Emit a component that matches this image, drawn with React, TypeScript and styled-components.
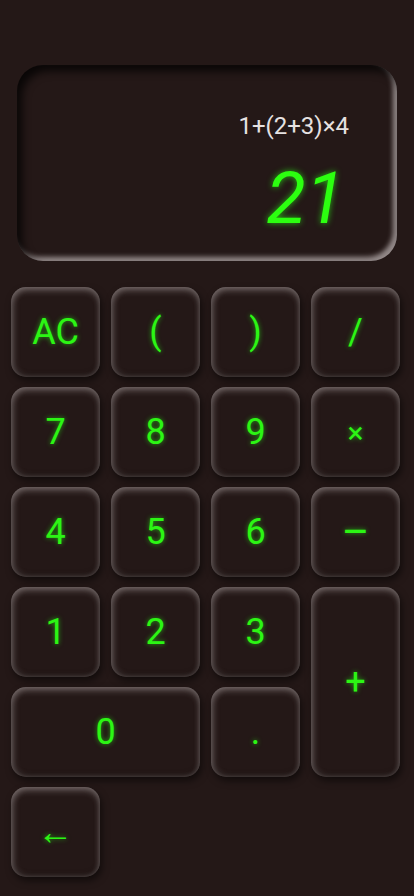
import React from "react";
import styled, { createGlobalStyle } from "styled-components";

const Global = createGlobalStyle`
  html, body { margin: 0; padding: 0; background: #241817; }
  body { font-family: Roboto, "Noto Sans", sans-serif; }
`;

const Page = styled.div`
  width: 414px;
  height: 896px;
  background: #241817;
  display: flex;
  flex-direction: column;
  box-sizing: border-box;
  padding-top: 65px;
  overflow: hidden;
`;

const Display = styled.div`
  margin: 0 17px 0 17px;
  height: 196px;
  border-radius: 26px;
  background: #241817;
  box-shadow: inset 5px 6px 8px rgba(0, 0, 0, 0.75),
    inset -4px -4px 5px rgba(190, 180, 180, 0.75);
  display: flex;
  flex-direction: column;
  align-items: flex-end;
  box-sizing: border-box;
  padding: 46px 48px 0 0;
`;

const Expression = styled.div`
  color: #e6e2e2;
  font-size: 24px;
  line-height: 30px;
`;

const Result = styled.div`
  color: #2cff10;
  font-size: 72px;
  font-style: italic;
  line-height: 90px;
  margin-right: 4px;
  margin-top: 13px;
  text-shadow: 0 0 6px rgba(40, 255, 20, 0.7);
`;

const Keypad = styled.div`
  margin-top: 26px;
  padding-left: 11px;
  display: grid;
  grid-template-columns: repeat(4, 89px);
  grid-auto-rows: 90px;
  gap: 10px 11px;
`;

const Key = styled.button<{ $wide?: boolean; $tall?: boolean; $size?: number }>`
  grid-column: span ${(p) => (p.$wide ? 2 : 1)};
  grid-row: span ${(p) => (p.$tall ? 2 : 1)};
  border: none;
  border-radius: 15px;
  background: #241817;
  box-shadow: inset 0 4px 6px rgba(215, 205, 205, 0.3),
    inset 3px 0 6px rgba(215, 205, 205, 0.22),
    inset -2px 0 5px rgba(215, 205, 205, 0.12),
    inset 0 -3px 5px rgba(0, 0, 0, 0.25),
    2px 4px 7px rgba(0, 0, 0, 0.5);
  color: #2cf514;
  font-family: Roboto, "Noto Sans", sans-serif;
  font-size: ${(p) => p.$size ?? 36}px;
  text-shadow: 0 0 5px rgba(40, 255, 20, 0.6);
  display: flex;
  align-items: center;
  justify-content: center;
  padding: 0;
  cursor: pointer;
`;

const keys: { label: string; wide?: boolean; tall?: boolean; size?: number }[] = [
  { label: "AC" },
  { label: "(" },
  { label: ")" },
  { label: "/" },
  { label: "7" },
  { label: "8" },
  { label: "9" },
  { label: "×", size: 30 },
  { label: "4" },
  { label: "5" },
  { label: "6" },
  { label: "–", size: 42 },
  { label: "1" },
  { label: "2" },
  { label: "3" },
  { label: "+", tall: true },
  { label: "0", wide: true },
  { label: "." },
  { label: "←" },
];

export default function App() {
  return (
    <>
      <Global />
      <Page>
        <Display>
          <Expression>1+(2+3)×4</Expression>
          <Result>21</Result>
        </Display>
        <Keypad>
          {keys.map((k) => (
            <Key key={k.label} $wide={k.wide} $tall={k.tall} $size={k.size}>
              {k.label}
            </Key>
          ))}
        </Keypad>
      </Page>
    </>
  );
}
